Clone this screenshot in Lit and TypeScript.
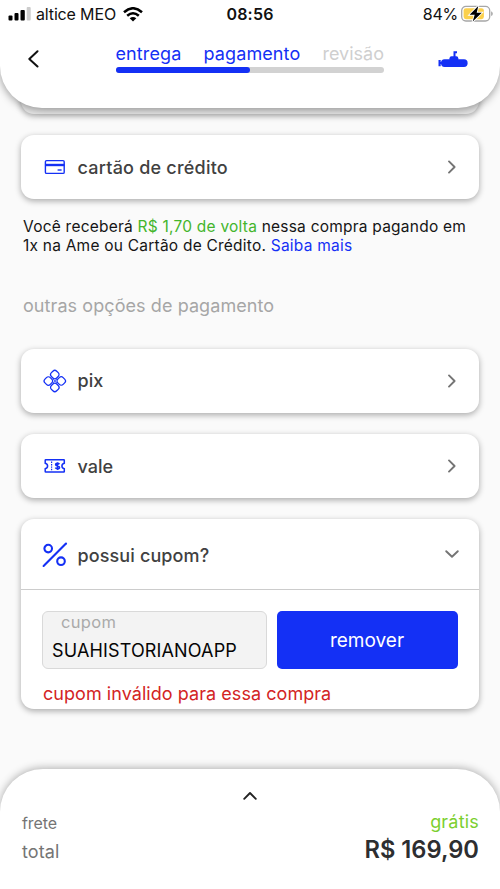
import { LitElement, html, svg, css } from "lit";
import { customElement, property } from "lit/decorators.js";

const chevron = (d: string, w: number, h: number, stroke: string, sw: number) =>
  html`<svg width=${w} height=${h} viewBox="0 0 ${w} ${h}" fill="none" stroke=${stroke} stroke-width=${sw} stroke-linecap="round" stroke-linejoin="round"><path d=${d} /></svg>`;

const icons = {
  card: svg`<rect x="2.4" y="5.6" width="18.8" height="12.8" rx="1.2" fill="none" stroke="#1430f5" stroke-width="1.4"/><path d="M2 10H21.5" stroke="#1430f5" stroke-width="2.4"/><path d="M14.6 15H18.6" stroke="#1430f5" stroke-width="1.4"/>`,
  pix: svg`<g transform="translate(11.8 12) rotate(45)" fill="none" stroke="#1430f5" stroke-width="1.3"><rect x="-8.3" y="-8.3" width="7.5" height="7.5" rx="2.7"/><rect x=".8" y="-8.3" width="7.5" height="7.5" rx="2.7"/><rect x="-8.3" y=".8" width="7.5" height="7.5" rx="2.7"/><rect x=".8" y=".8" width="7.5" height="7.5" rx="2.7"/><path d="M-3 0H3M0-3V3" stroke-width=".8"/></g>`,
  ticket: svg`<path d="M2.8 5.7H20.8Q21.3 5.7 21.3 6.3V9.3Q18.9 10 18.9 12Q18.9 14 21.3 14.7V17.5Q21.3 18.1 20.8 18.1H2.8Q2.2 18.1 2.2 17.5V14.7Q4.6 14 4.6 12Q4.6 10 2.2 9.3V6.3Q2.2 5.7 2.8 5.7Z" fill="none" stroke="#1430f5" stroke-width="1.5"/><path d="M8.6 7.6V16.6" stroke="#1430f5" stroke-width="1.2" stroke-dasharray="1.4 1"/><path d="M16.4 10.2Q15.8 9.4 14.3 9.4Q12.6 9.4 12.6 10.6Q12.6 11.7 14.5 12Q16.5 12.3 16.5 13.4Q16.5 14.7 14.5 14.7Q12.9 14.7 12.3 13.7M14.5 8.2V15.9" fill="none" stroke="#1430f5" stroke-width="1.6"/>`,
};

@customElement("option-card")
class OptionCard extends LitElement {
  @property() label = "";
  @property() icon: keyof typeof icons = "card";
  static styles = css`
    :host { display: flex; align-items: center; height: 64px; box-sizing: border-box; padding: 0 19px 0 22px; border-radius: 13px; background: #fff;
      box-shadow: 0 2px 6px rgba(0,0,0,.33); }
    .icon { width: 24px; height: 24px; margin-right: 10.5px; }
    .label { flex: 1; padding-top: var(--drop, 2px); font: 500 18px/24px Inter, sans-serif; letter-spacing: var(--tracking, .22px); color: #414141; }
    .arrow { display: flex; }
  `;
  render() {
    return html`<svg class="icon" viewBox="0 0 24 24">${icons[this.icon]}</svg>
      <span class="label">${this.label}</span>
      <span class="arrow">${chevron("M5 2.4L10.6 8L5 13.6", 16, 16, "#747474", 1.9)}</span>`;
  }
}

@customElement("app-root")
class AppRoot extends LitElement {
  static styles = css`
    :host { display: flex; flex-direction: column; height: 889px; overflow: hidden; background: #fafafa; font-family: Inter, "Liberation Sans", sans-serif; color: #111; }
    * { box-sizing: border-box; }
    svg { display: block; flex: none; }
    header { position: relative; z-index: 2; height: 108px; flex: none; background: #fff; border-radius: 0 0 42px 42px; box-shadow: 0 2px 8px rgba(0,0,0,.38); }
    .status { display: grid; grid-template-columns: 1fr auto 1fr; height: 28px; align-items: center; padding: 0 7px 0 8px; font-size: 16px; line-height: 20px; color: #111; }
    .carrier, .battery { display: flex; align-items: center; }
    .carrier .name { margin: 0 7px 0 5px; letter-spacing: -.15px; }
    .battery { justify-content: flex-end; gap: 3px; }
    .battery span { letter-spacing: -.25px; }
    .time { font-weight: 600; letter-spacing: .2px; margin-right: 1px; }
    .nav { display: flex; align-items: flex-start; padding-left: 27px; }
    .back { margin-top: 22px; }
    .steps { width: 268.5px; margin: 14px 0 0 74.5px; }
    .labels { display: flex; justify-content: space-between; font-size: 18px; line-height: 24px; letter-spacing: .1px; color: #1430f5; white-space: nowrap; }
    .labels .off { color: #cfcfcf; letter-spacing: 0; }
    .track { height: 5.5px; margin-top: 1px; border-radius: 3px; background: #d2d2d2; }
    .fill { height: 5.5px; width: 50%; border-radius: 3px; background: #1430f5; }
    .sub { margin: 22px 0 0 54px; }
    main { flex: 1; padding: 0 21px; min-height: 0; }
    .previous { height: 40px; margin-top: -34px; border-radius: 13px; background: #e9e9e9; box-shadow: 0 2px 6px rgba(0,0,0,.33); }
    .first { margin-top: 21px; }
    .note { margin: 19px 0 0 2px; font-size: 15.5px; line-height: 18.5px; letter-spacing: .225px; white-space: nowrap; color: #151515; }
    .green { color: #43b52c; }
    .link { color: #1430f5; }
    h2 { margin: 39px 0 0 2px; font-weight: 400; font-size: 18px; line-height: 24px; letter-spacing: .08px; color: #a6a6a6; }
    .pix { margin-top: 31px; --tracking: 0px; --drop: 0px; }
    .vale { margin-top: 21px; --tracking: 0px; --drop: 1px; }
    .coupon { height: 190px; margin-top: 21px; border-radius: 13px; background: #fff; box-shadow: 0 2px 6px rgba(0,0,0,.33); }
    .top { display: flex; align-items: center; height: 71px; padding: 2px 19px 0 21px; border-bottom: 1.5px solid #ccc; }
    .top span { flex: 1; margin-left: 9.5px; padding-top: 2px; font-weight: 500; font-size: 18px; line-height: 24px; letter-spacing: .12px; color: #414141; }
    .form { display: flex; gap: 10px; padding: 21px 21px 0; }
    .field { width: 225px; height: 58px; border: 1px solid #d9d9d9; border-radius: 6px; background: #f3f3f3; padding-left: 9px; }
    .field label { display: block; margin-left: 9px; font-size: 16.5px; line-height: 20px; letter-spacing: .3px; color: #aaa; }
    .value { margin-top: 7px; font-size: 18px; line-height: 24px; letter-spacing: .15px; color: #050505; }
    button { flex: 1; height: 57.5px; border: 0; border-radius: 5px; background: #1430f5; color: #fff; font: 400 19px/24px Inter, sans-serif; padding: 2px 1px 0 0; }
    .error { margin: 13px 0 0 22px; font-size: 18px; line-height: 24px; letter-spacing: .05px; color: #d32424; white-space: nowrap; }
    footer { flex: none; height: 120px; background: #fff; border-radius: 43px 43px 0 0; box-shadow: 0 -1px 9px rgba(0,0,0,.3); padding: 18px 21px 0 22px; }
    .up { display: flex; justify-content: center; height: 17px; }
    .up svg { margin-left: -1px; }
    .row { display: flex; justify-content: space-between; align-items: center; color: #757575; }
    .frete { height: 36px; font-size: 16px; letter-spacing: -.1px; }
    .frete span { padding-top: 2px; }
    .frete b { font-weight: 400; font-size: 18px; letter-spacing: .2px; margin-top: -1px; color: #7bcf2f; }
    .total { height: 24px; font-size: 18px; letter-spacing: .1px; }
    .total span { margin-top: -2px; }
    .total b { font-weight: 600; font-size: 23.7px; letter-spacing: 0; margin-top: -6px; color: #2d2e30; }
  `;
  render() {
    return html`
      <header>
        <div class="status">
          <div class="carrier">
            <svg width="23" height="14" viewBox="0 0 23 14"><g fill="#000"><rect x=".5" y="8.5" width="4" height="5" rx="1"/><rect x="6.5" y="6" width="4" height="7.5" rx="1"/><rect x="12.5" y="3" width="4.3" height="10.5" rx="1"/></g><rect x="18.7" y="0" width="4" height="13.5" rx="1" fill="#ccc"/></svg>
            <span class="name">altice MEO</span>
            <svg width="20" height="15" viewBox="0 0 20 15"><g fill="none" stroke="#000" stroke-width="2.5"><path d="M1 5.2Q10-2.7 19 5.2"/><path d="M4.2 8.8Q10 3.7 15.8 8.8"/></g><path d="M10 14.5L6.7 11.3Q10 8.6 13.3 11.3Z"/></svg>
          </div>
          <div class="time">08:56</div>
          <div class="battery">
            <span>84%</span>
            <svg width="32" height="18" viewBox="0 0 32 18"><rect x=".7" y="1.4" width="28" height="14.6" rx="4.2" fill="#fff" stroke="#a7a7a7" stroke-width="1.3"/><rect x="2.6" y="3.2" width="20.3" height="11" rx="2.4" fill="#fbd04c"/><path d="M30.1 6.3V11.1Q31.8 10.3 31.8 8.7Q31.8 7.1 30.1 6.3Z" fill="#a7a7a7"/><path d="M17.3 .9L8.6 9.8H13.7L11.7 16.6L20.8 7.7H15.7Z" fill="#000" stroke="#fff" stroke-width="1.8" paint-order="stroke"/></svg>
          </div>
        </div>
        <div class="nav">
          <svg class="back" width="14" height="18" viewBox="0 0 14 18" fill="none" stroke="#111" stroke-width="2" stroke-linecap="round" stroke-linejoin="round"><path d="M10.5 1.2L2.3 8.9L10.5 16.5"/></svg>
          <div class="steps">
            <div class="labels"><span>entrega</span><span>pagamento</span><span class="off">revisão</span></div>
            <div class="track"><div class="fill"></div></div>
          </div>
          <svg class="sub" width="30" height="18" viewBox="0 0 30 18"><path d="M16.5 7V2.2H19" fill="none" stroke="#1430f5" stroke-width="2"/><path d="M11.5 10V8.2Q11.5 6.2 13.5 6.2H18.3Q20.3 6.2 20.3 8.2V10Z" fill="#1430f5"/><rect x="3" y="9.2" width="26.6" height="7.7" rx="3.6" fill="#1430f5"/><path d="M1.6 10V16.2M1.6 13H5" stroke="#1430f5" stroke-width="2.2"/></svg>
        </div>
      </header>
      <main>
        <div class="previous"></div>
        <option-card class="first" icon="card" label="cartão de crédito"></option-card>
        <div class="note"><div>Você receberá <span class="green">R$ 1,70 de volta</span> nessa compra pagando em</div><div>1x na Ame ou Cartão de Crédito. <span class="link">Saiba mais</span></div></div>
        <h2>outras opções de pagamento</h2>
        <option-card class="pix" icon="pix" label="pix"></option-card>
        <option-card class="vale" icon="ticket" label="vale"></option-card>
        <section class="coupon">
          <div class="top">
            <svg width="26" height="26" viewBox="0 0 26 26" fill="none" stroke="#1430f5" stroke-width="2.1" stroke-linecap="round"><path d="M1.6 24L24 1.6"/><circle cx="6.2" cy="6.6" r="3.8"/><circle cx="19" cy="19.2" r="3.8"/></svg>
            <span>possui cupom?</span>
            ${chevron("M2.2 4.2L8 9.8L13.8 4.2", 16, 16, "#747474", 1.9)}
          </div>
          <div class="form">
            <div class="field"><label>cupom</label><div class="value">SUAHISTORIANOAPP</div></div>
            <button>remover</button>
          </div>
          <div class="error">cupom inválido para essa compra</div>
        </section>
      </main>
      <footer>
        <div class="up">${chevron("M2.2 11.8L8 6L13.8 11.8", 16, 16, "#222", 1.9)}</div>
        <div class="row frete"><span>frete</span><b>grátis</b></div>
        <div class="row total"><span>total</span><b>R$ 169,90</b></div>
      </footer>`;
  }
}
